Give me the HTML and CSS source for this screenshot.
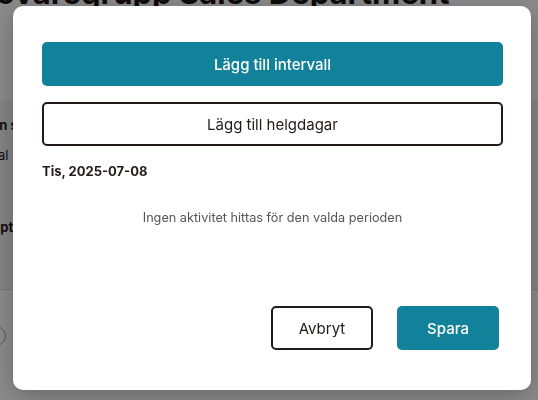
FILE: index.html
```html
<!DOCTYPE html>
<html lang="sv">
<head>
<meta charset="utf-8">
<title>Lägg till intervall</title>
<link rel="stylesheet" href="styles.css">
</head>
<body>
  <div class="page">
    <h1 class="page-title">Prövaregrupp Sales Department</h1>
    <div class="page-sub">
      <span class="sub-left">Hantera</span>
      <span class="sub-right">Redigeringsinformation</span>
    </div>
    <section class="panel">
      <div class="panel-row strong">Planen s</div>
      <div class="panel-row">Normal</div>
      <div class="panel-row strong gap">Koncept</div>
    </section>
    <div class="page-rule"></div>
    <div class="page-radio"><span class="radio"></span></div>
  </div>

  <div class="overlay"></div>

  <div class="modal" role="dialog" aria-modal="true">
    <div class="modal-body">
      <button class="btn btn-primary btn-block">Lägg till intervall</button>
      <button class="btn btn-outline btn-block">Lägg till helgdagar</button>
      <div class="day-title">Tis, 2025-07-08</div>
      <p class="empty">Ingen aktivitet hittas för den valda perioden</p>
    </div>
    <div class="modal-footer">
      <button class="btn btn-outline btn-footer">Avbryt</button>
      <button class="btn btn-primary btn-footer">Spara</button>
    </div>
  </div>
</body>
</html>
```

FILE: styles.css
```css
* { box-sizing: border-box; }

html, body {
  margin: 0;
  padding: 0;
  width: 538px;
  height: 400px;
  overflow: hidden;
}

body {
  font-family: Inter, "Noto Sans", "Liberation Sans", sans-serif;
  color: #231a1a;
  background: #fff;
}

/* background page */
.page {
  display: flex;
  flex-direction: column;
  height: 400px;
  overflow: hidden;
}

.page-title {
  margin: -22px 0 0 -36px;
  font-size: 31px;
  line-height: 30px;
  font-weight: 700;
  white-space: nowrap;
  color: #1d1414;
}

.page-sub {
  display: flex;
  justify-content: space-between;
  margin: 65px -60px 0 -48px;
  font-size: 12px;
  line-height: 16px;
  font-style: italic;
  color: #555;
  white-space: nowrap;
}

.sub-right { margin-right: -88px; }

.panel {
  margin-top: 11px;
  padding: 17px 0 30px 0;
  display: flex;
  flex-direction: column;
  height: 189px;
  background: #f4f4f4;
}

.panel-row {
  font-size: 13px;
  margin-left: -36px;
  line-height: 16px;
  white-space: nowrap;
}

.panel-row + .panel-row { margin-top: 14px; }
.panel-row.strong { font-weight: 700; }
.panel-row.gap { margin-top: 56px; margin-left: -40px; }

.page-rule {
  height: 1px;
  background: #ddd;
}

.page-radio {
  margin-top: 36px;
  margin-left: -14px;
}

.radio {
  display: block;
  width: 20px;
  height: 20px;
  border: 1px solid #999;
  border-radius: 50%;
}

/* overlay */
.overlay {
  position: fixed;
  inset: 0;
  background: rgba(0, 0, 0, 0.46);
}

/* modal */
.modal {
  position: fixed;
  left: 13px;
  top: 6px;
  width: 518px;
  height: 384px;
  background: #fff;
  border-radius: 10px;
  box-shadow: 0 6px 24px rgba(0, 0, 0, 0.25);
  padding: 36px 28px 40px 29px;
  display: flex;
  flex-direction: column;
}

.modal-body {
  display: flex;
  flex-direction: column;
}

.btn {
  font-family: Inter, "Noto Sans", "Liberation Sans", sans-serif;
  font-size: 15px;
  height: 44px;
  border-radius: 5px;
  cursor: pointer;
  padding: 0 16px;
  line-height: 1;
}

.btn-block { width: 100%; }

.btn-primary {
  background: #12829a;
  color: #fff;
  border: 0;
  font-weight: 500;
}

.btn-outline {
  background: #fff;
  color: #231a1a;
  border: 2px solid #231a1a;
  font-weight: 400;
}

.btn-block + .btn-block { margin-top: 16px; }

.day-title {
  margin-top: 16px;
  font-size: 13px;
  line-height: 18px;
  font-weight: 700;
  color: #231a1a;
}

.empty {
  margin: 30px 0 0;
  font-size: 12.7px;
  line-height: 16px;
  text-align: center;
  color: #555;
  font-weight: 400;
}

.modal-footer {
  margin-top: auto;
  display: flex;
  justify-content: flex-end;
  gap: 24px;
  padding-right: 4px;
}

.btn-footer { width: 102px; }
```
